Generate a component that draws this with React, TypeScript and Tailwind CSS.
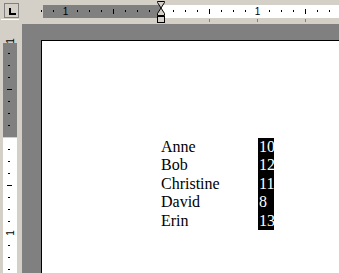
const TOP_MARGIN_X = 161;
const LEFT_MARGIN_Y = 137;

const rows = [
  { name: 'Anne', value: '10' },
  { name: 'Bob', value: '12' },
  { name: 'Christine', value: '11' },
  { name: 'David', value: '8' },
  { name: 'Erin', value: '13' },
];

function TopTicks() {
  const marks = [];
  for (let k = -10; k <= 15; k++) {
    if (k === 0) continue;
    const x = TOP_MARGIN_X + k * 12;
    if (k % 8 === 0) {
      marks.push(
        <text key={k} x={x + 0.5} y={15} textAnchor="middle" fontSize="10" fontFamily="Liberation Sans, Arial, sans-serif" fill="#000">
          {Math.abs(k / 8)}
        </text>
      );
    } else if (k % 4 === 0) {
      marks.push(<rect key={k} x={x} y={9} width={1} height={5} fill="#000" />);
    } else {
      marks.push(<rect key={k} x={x} y={10} width={1} height={2} fill="#000" />);
    }
  }
  return (
    <svg className="absolute left-0 top-0" width={339} height={24}>
      {marks}
      {[209, 257, 305].map((x) => (
        <rect key={x} x={x} y={19} width={1} height={3} fill="#808080" />
      ))}
      {/* indent markers */}
      <path d="M157.5 1.5 H164.5 V2.5 L161 8 L157.5 2.5 Z" fill="#d4d0c8" stroke="#000" />
      <path d="M161 8 L164.5 13.5 V15.5 H157.5 V13.5 Z" fill="#d4d0c8" stroke="#000" />
      <rect x={157.5} y={16.5} width={7} height={6} fill="#d4d0c8" stroke="#000" />
    </svg>
  );
}

function LeftTicks() {
  const marks = [];
  for (let k = -8; k <= 12; k++) {
    if (k === 0) continue;
    const y = LEFT_MARGIN_Y + k * 12 - 24;
    if (k % 8 === 0) {
      marks.push(
        <text
          key={k}
          x={14}
          y={y}
          textAnchor="middle"
          fontSize="10"
          fontFamily="Liberation Sans, Arial, sans-serif"
          fill="#000"
          transform={`rotate(-90 14 ${y})`}
        >
          1
        </text>
      );
    } else if (k % 4 === 0) {
      marks.push(<rect key={k} x={7} y={y} width={5} height={1} fill="#000" />);
    } else {
      marks.push(<rect key={k} x={8} y={y} width={2} height={1} fill="#000" />);
    }
  }
  return (
    <svg className="absolute left-0 top-0" width={22} height={249}>
      {marks}
    </svg>
  );
}

export default function App() {
  return (
    <div className="w-[339px] h-[273px] bg-[#d4d0c8] overflow-hidden flex flex-col select-none">
      <div className="relative h-[24px] shrink-0 flex">
        <div className="w-[22px] shrink-0 pt-[3px] pl-[1px]">
          <div className="ml-[3px] w-[15px] h-[15px] border border-[#808080] flex items-center justify-center">
            <div className="w-[7px] h-[7px] border-l-2 border-b-2 border-black mt-[1px] ml-[1px]" />
          </div>
          <div className="w-[18px] h-px bg-white mt-px" />
        </div>
        <div className="ml-[21px] mt-[5px] h-[13px] flex flex-1">
          <div className="w-[118px] bg-[#808080]" />
          <div className="flex-1 bg-white" />
        </div>
        <TopTicks />
      </div>
      <div className="flex flex-1">
        <div className="relative w-[22px] shrink-0 flex flex-col pt-[19px] pl-[3px]">
          <div className="w-[14px] h-[94px] bg-[#808080]" />
          <div className="w-[14px] flex-1 bg-white mt-px" />
          <LeftTicks />
        </div>
        <div className="flex-1 bg-[#808080] pl-[19px] pt-[16px] flex">
          <div className="flex-1 bg-white border-t border-l border-black pl-[119px] pt-[97px]">
            <div className="flex text-[16px] leading-[18.4px] text-black" style={{ fontFamily: '"Liberation Serif", "Times New Roman", serif' }}>
              <div className="w-[97px]">
                {rows.map((r) => (
                  <div key={r.name}>{r.name}</div>
                ))}
              </div>
              <div className="w-[16px] bg-black text-white">
                {rows.map((r) => (
                  <div key={r.name} className="pl-px">{r.value}</div>
                ))}
              </div>
            </div>
          </div>
        </div>
      </div>
    </div>
  );
}
